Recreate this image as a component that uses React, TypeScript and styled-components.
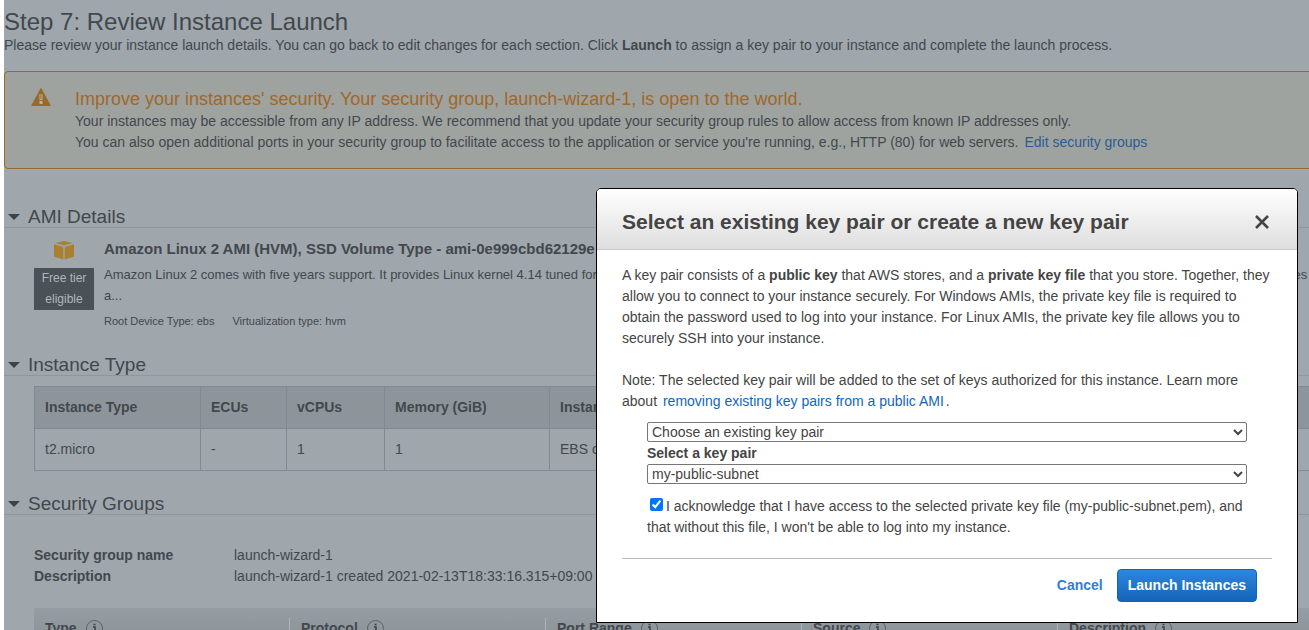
import React from "react";
import styled, { createGlobalStyle } from "styled-components";

const GlobalStyle = createGlobalStyle`
  * { box-sizing: border-box; }
  body {
    margin: 0;
    background: #ffffff;
    color: #42484d;
    font-family: "Liberation Sans", Arial, sans-serif;
    font-size: 14px;
    line-height: 21px;
  }
  h1, h2, h3, p, dl, dd, dt { margin: 0; }
`;

const Viewport = styled.div`
  position: relative;
  height: 100vh;
  margin-left: 4px;
  overflow: hidden;
  background: #9fa6ac;
`;

const Page = styled.main`
  margin-right: -5px;
  padding-top: 8px;
`;

const PageTitle = styled.h1`
  font-size: 24px;
  font-weight: normal;
  line-height: 27px;
`;

const Alert = styled.section`
  display: flex;
  gap: 24px;
  margin-top: 15px;
  padding: 15px 26px;
  border: 1px solid #98682c;
  border-radius: 4px;
  background: #9fa3a0;
`;

const AlertIcon = styled.svg`
  flex: none;
  width: 20px;
  height: 20px;
`;

const AlertTitle = styled.h2`
  color: #a0672b;
  font-size: 18px;
  font-weight: normal;
  line-height: 24px;
`;

const PageLink = styled.a`
  margin-left: 2px;
  color: #2c5b93;
  text-decoration: none;
`;

const SectionHeading = styled.h2<{ $gap: number }>`
  display: flex;
  align-items: center;
  gap: 8px;
  margin-top: ${(p) => p.$gap}px;
  padding: 2px 0 0 4px;
  border-bottom: 1px solid #8f979d;
  font-size: 19px;
  font-weight: normal;
  line-height: 20px;
`;

const Caret = styled.span`
  border: 6px solid transparent;
  border-top-color: #3c4248;
  border-bottom: 0;
`;

const AmiRow = styled.div`
  display: flex;
  gap: 10px;
  padding: 10px 0 0 30px;
`;

const AmiSide = styled.div`
  display: flex;
  flex: none;
  flex-direction: column;
  align-items: center;
  gap: 8px;
  width: 60px;
  padding-top: 3px;
`;

const FreeTier = styled.div`
  width: 100%;
  background: #4a5157;
  color: #b1b7bc;
  font-size: 12px;
  text-align: center;
`;

const AmiName = styled.h3`
  margin-bottom: 5px;
  font-size: 15px;
  line-height: 21px;
  white-space: nowrap;
`;

const AmiText = styled.p`
  font-size: 13px;
  white-space: nowrap;
`;

const AmiMeta = styled.div`
  display: flex;
  gap: 18px;
  margin-top: 5px;
  font-size: 11px;
`;

const InstanceTable = styled.table`
  width: calc(100% - 30px);
  margin: 10px 0 0 30px;
  border-collapse: collapse;
  table-layout: fixed;

  th, td {
    height: 42px;
    padding: 0 10px;
    border: 1px solid #828990;
    text-align: left;
    white-space: nowrap;
  }
  th { background: #8e959a; }
`;

const GroupFacts = styled.dl`
  display: grid;
  grid-template-columns: 200px 1fr;
  margin: 30px 0 21px 30px;

  dt { font-weight: bold; }
`;

const RulesTable = styled.table`
  width: calc(100% - 30px);
  margin-left: 30px;
  border-collapse: collapse;
  table-layout: fixed;
  background: linear-gradient(#969da3, #878e94);

  th {
    padding: 10px 0;
    text-align: left;
  }
`;

const RuleLabel = styled.span`
  display: flex;
  align-items: center;
  gap: 9px;
  padding-left: 11px;
  border-right: 1px solid #aeb4b9;
`;

const Dialog = styled.div`
  position: absolute;
  top: 188px;
  right: 11px;
  width: 702px;
  overflow: hidden;
  border: 1px solid #000000;
  border-radius: 5px 5px 0 0;
  background: #ffffff;
  color: #444444;
`;

const DialogHeader = styled.header`
  display: flex;
  align-items: center;
  justify-content: space-between;
  padding: 21px 25px 15px;
  border-bottom: 1px solid #c8c8c8;
  background: linear-gradient(#ffffff, #dedede);
`;

const DialogTitle = styled.h2`
  font-size: 21px;
  line-height: 24px;
`;

const CloseButton = styled.button`
  display: flex;
  padding: 2px;
  border: 0;
  background: none;
  color: #444444;
`;

const DialogBody = styled.div`
  padding: 15px 25px 20px;
`;

const Note = styled.p`
  margin-top: 21px;
`;

const DialogLink = styled.a`
  margin: 0 2px;
  color: #1166bb;
  text-decoration: none;
`;

const KeyForm = styled.form`
  display: flex;
  flex-direction: column;
  margin: 10px 25px 20px;
`;

const Select = styled.select`
  height: 20px;
  padding: 0;
  border: 1px solid #767676;
  border-radius: 2px;
  background: #ffffff;
  color: #444444;
  font: inherit;
`;

const FieldLabel = styled.label`
  margin-top: 1px;
  font-weight: bold;
`;

const Acknowledge = styled.label`
  margin-top: 12px;
`;

const Checkbox = styled.input`
  width: 13px;
  height: 13px;
  margin: 0 3px;
  vertical-align: 0;
`;

const Actions = styled.footer`
  display: flex;
  align-items: center;
  justify-content: flex-end;
  gap: 14px;
  padding: 10px 15px 0;
  border-top: 1px solid #bbbbbb;
`;

const Button = styled.button<{ $primary?: boolean }>`
  height: 33px;
  padding: ${(p) => (p.$primary ? "0 10px 2px" : "0 0 2px")};
  border: ${(p) => (p.$primary ? "1px solid #1263b5" : "0")};
  border-radius: 4px;
  background: ${(p) => (p.$primary ? "linear-gradient(#2e86dd, #1465ba)" : "none")};
  color: ${(p) => (p.$primary ? "#ffffff" : "#2e7fdb")};
  font: bold 14px "Liberation Sans", Arial, sans-serif;
`;

const InfoIcon = () => (
  <svg width="17" height="17" viewBox="0 0 17 17" fill="none" aria-hidden="true">
    <circle cx="8.5" cy="8.5" r="8" stroke="#5b6268" />
    <path d="M7 7h2v5M6.5 12.5h4.500M7.500 4.500h2" stroke="#3c4248" strokeWidth="1.500" />
  </svg>
);

const CubeIcon = () => (
  <svg width="20" height="19" viewBox="0 0 20 19" fill="#a8802f" aria-hidden="true">
    <path d="M10 0 18.500 2 10 4.500 1.500 2Z" />
    <path d="M0 3.300 9.300 6V18.500L0 15.500Z" />
    <path d="M20 3.300 10.700 6V18.500L20 15.500Z" />
  </svg>
);

const instanceColumns = [
  { name: "Instance Type", value: "t2.micro", width: 166 },
  { name: "ECUs", value: "-", width: 86 },
  { name: "vCPUs", value: "1", width: 98 },
  { name: "Memory (GiB)", value: "1", width: 165 },
  { name: "Instance Storage (GB)", value: "EBS only", width: 220 },
  { name: "EBS-Optimized Available", value: "-", width: 230 },
  { name: "Network Performance", value: "Low to Moderate" },
];

const ruleColumns = ["Type", "Protocol", "Port Range", "Source", "Description"];

const Section = ({ title, gap }: { title: string; gap: number }) => (
  <SectionHeading $gap={gap}>
    <Caret />
    {title}
  </SectionHeading>
);

export default function App() {
  return (
    <>
      <GlobalStyle />
      <Viewport>
        <Page>
          <PageTitle>Step 7: Review Instance Launch</PageTitle>
          <p>
            Please review your instance launch details. You can go back to edit changes for each
            section. Click <b>Launch</b> to assign a key pair to your instance and complete the
            launch process.
          </p>

          <Alert>
            <AlertIcon viewBox="0 0 20 20" aria-hidden="true">
              <path
                d="M10 1.500 19.300 18.500H.7Z"
                fill="#98682c"
                stroke="#98682c"
                strokeLinejoin="round"
              />
              <path d="M8.500 7h3v6h-3zM8.500 14h3v3h-3z" fill="#b4b3a6" />
              <path d="M9.500 7h1v5h-1z" fill="#98682c" />
            </AlertIcon>
            <div>
              <AlertTitle>
                Improve your instances' security. Your security group, launch-wizard-1, is open to
                the world.
              </AlertTitle>
              <p>
                Your instances may be accessible from any IP address. We recommend that you update
                your security group rules to allow access from known IP addresses only.
              </p>
              <p>
                You can also open additional ports in your security group to facilitate access to
                the application or service you're running, e.g., HTTP (80) for web servers.{" "}
                <PageLink href="#security-groups">Edit security groups</PageLink>
              </p>
            </div>
          </Alert>

          <Section title="AMI Details" gap={36} />
          <AmiRow>
            <AmiSide>
              <CubeIcon />
              <FreeTier>
                Free tier
                <br />
                eligible
              </FreeTier>
            </AmiSide>
            <div>
              <AmiName>Amazon Linux 2 AMI (HVM), SSD Volume Type - ami-0e999cbd62129e</AmiName>
              <AmiText>
                Amazon Linux 2 comes with five years support. It provides Linux kernel 4.14 tuned
                for optimal performance on Amazon EC2, systemd 219, GCC 7.3, Glibc 2.26, Binutils
                2.29.1, and the latest software packages
                <br />
                a...
              </AmiText>
              <AmiMeta>
                <span>Root Device Type: ebs</span>
                <span>Virtualization type: hvm</span>
              </AmiMeta>
            </div>
          </AmiRow>

          <Section title="Instance Type" gap={21} />
          <InstanceTable>
            <colgroup>
              {instanceColumns.map((c) => (
                <col key={c.name} width={c.width} />
              ))}
            </colgroup>
            <thead>
              <tr>
                {instanceColumns.map((c) => (
                  <th key={c.name}>{c.name}</th>
                ))}
              </tr>
            </thead>
            <tbody>
              <tr>
                {instanceColumns.map((c) => (
                  <td key={c.name}>{c.value}</td>
                ))}
              </tr>
            </tbody>
          </InstanceTable>

          <Section title="Security Groups" gap={21} />
          <GroupFacts id="security-groups">
            <dt>Security group name</dt>
            <dd>launch-wizard-1</dd>
            <dt>Description</dt>
            <dd>launch-wizard-1 created 2021-02-13T18:33:16.315+09:00</dd>
          </GroupFacts>
          <RulesTable>
            <thead>
              <tr>
                {ruleColumns.map((name) => (
                  <th key={name}>
                    <RuleLabel>
                      {name}
                      <InfoIcon />
                    </RuleLabel>
                  </th>
                ))}
              </tr>
            </thead>
          </RulesTable>
        </Page>

        <Dialog role="dialog" aria-labelledby="dialog-title">
          <DialogHeader>
            <DialogTitle id="dialog-title">
              Select an existing key pair or create a new key pair
            </DialogTitle>
            <CloseButton type="button" aria-label="Close">
              <svg width="15" height="14" viewBox="0 0 15 14" aria-hidden="true">
                <path d="M1 1 13 13M13 1 1 13" stroke="currentColor" strokeWidth="2.600" />
              </svg>
            </CloseButton>
          </DialogHeader>
          <DialogBody>
            <p>
              A key pair consists of a <b>public key</b> that AWS stores, and a{" "}
              <b>private key file</b> that you store. Together, they allow you to connect to your
              instance securely. For Windows AMIs, the private key file is required to obtain the
              password used to log into your instance. For Linux AMIs, the private key file allows
              you to securely SSH into your instance.
            </p>
            <Note>
              Note: The selected key pair will be added to the set of keys authorized for this
              instance. Learn more about{" "}
              <DialogLink href="#remove">removing existing key pairs from a public AMI</DialogLink>.
            </Note>
            <KeyForm>
              <Select aria-label="Key pair option">
                <option>Choose an existing key pair</option>
              </Select>
              <FieldLabel htmlFor="key-pair">Select a key pair</FieldLabel>
              <Select id="key-pair">
                <option>my-public-subnet</option>
              </Select>
              <Acknowledge>
                <Checkbox type="checkbox" defaultChecked />I acknowledge that I have access to the
                selected private key file (my-public-subnet.pem), and that without this file, I
                won't be able to log into my instance.
              </Acknowledge>
            </KeyForm>
            <Actions>
              <Button type="button">Cancel</Button>
              <Button type="button" $primary>
                Launch Instances
              </Button>
            </Actions>
          </DialogBody>
        </Dialog>
      </Viewport>
    </>
  );
}
